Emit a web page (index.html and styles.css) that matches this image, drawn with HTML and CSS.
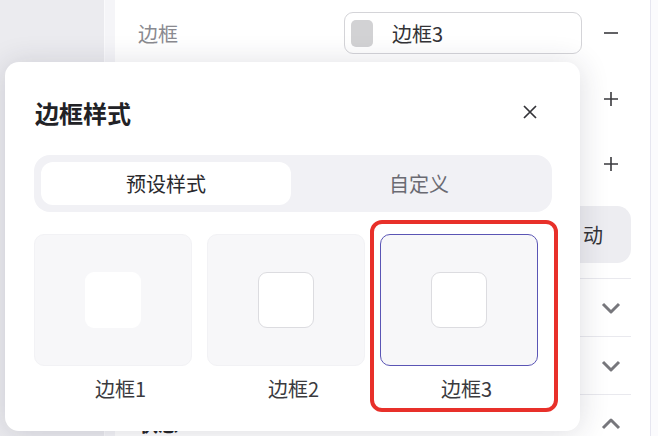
FILE: index.html
```html
<!DOCTYPE html>
<html lang="zh-CN">
<head>
<meta charset="utf-8">
<link rel="stylesheet" href="styles.css">
</head>
<body>
<div class="app">
  <aside class="sidebar"></aside>
  <div class="gutter"></div>
  <main class="panel">
    <div class="row row-1">
      <span class="label">边框</span>
      <div class="select"><span class="swatch"></span><span class="select-text">边框3</span></div>
      <span class="icon-box"><svg width="16" height="16" viewBox="0 0 16 16"><path d="M1 8h14" stroke="#3a3a3e" stroke-width="1.6" fill="none"/></svg></span>
    </div>
    <div class="row row-2">
      <span class="label"></span>
      <span class="icon-box"><svg width="16" height="16" viewBox="0 0 16 16"><path d="M1 8h14M8 1v14" stroke="#3a3a3e" stroke-width="1.6" fill="none"/></svg></span>
    </div>
    <div class="row row-3">
      <span class="label"></span>
      <span class="icon-box"><svg width="16" height="16" viewBox="0 0 16 16"><path d="M1 8h14M8 1v14" stroke="#3a3a3e" stroke-width="1.6" fill="none"/></svg></span>
    </div>
    <div class="row row-4">
      <span class="label"></span>
      <div class="pill">动</div>
    </div>
    <div class="row row-fold">
      <span class="label"></span>
      <span class="icon-box"><svg width="20" height="12" viewBox="0 0 20 12"><path d="M2 2l8 8 8-8" stroke="#77777c" stroke-width="3" fill="none" stroke-linejoin="round"/></svg></span>
    </div>
    <div class="row row-fold">
      <span class="label"></span>
      <span class="icon-box"><svg width="20" height="12" viewBox="0 0 20 12"><path d="M2 2l8 8 8-8" stroke="#77777c" stroke-width="3" fill="none" stroke-linejoin="round"/></svg></span>
    </div>
    <div class="row row-fold">
      <span class="label strong">状态</span>
      <span class="icon-box"><svg width="20" height="12" viewBox="0 0 20 12"><path d="M2 10l8-8 8 8" stroke="#77777c" stroke-width="3" fill="none" stroke-linejoin="round"/></svg></span>
    </div>
  </main>
  <div class="edge"></div>
</div>

<section class="dialog">
  <header class="dialog-head">
    <h2 class="dialog-title">边框样式</h2>
    <span class="close"><svg width="14" height="14" viewBox="0 0 14 14"><path d="M1 1l12 12M13 1L1 13" stroke="#333338" stroke-width="1.7" fill="none"/></svg></span>
  </header>
  <div class="segment">
    <div class="seg-tab active">预设样式</div>
    <div class="seg-tab">自定义</div>
  </div>
  <div class="presets">
    <div class="preset">
      <div class="card"><div class="inner"></div></div>
      <div class="preset-name">边框1</div>
    </div>
    <div class="preset">
      <div class="card"><div class="inner bordered"></div></div>
      <div class="preset-name">边框2</div>
    </div>
    <div class="preset">
      <div class="card selected"><div class="inner bordered"></div></div>
      <div class="preset-name">边框3</div>
    </div>
  </div>
</section>

<div class="highlight"></div>
</body>
</html>
```

FILE: styles.css
```css
* { box-sizing: border-box; }
html, body {
  margin: 0;
  padding: 0;
  width: 658px;
  height: 436px;
  overflow: hidden;
  font-family: "Noto Sans CJK SC", "Noto Sans", sans-serif;
  background: #ffffff;
}
.app {
  display: flex;
  width: 658px;
  height: 436px;
}
.sidebar {
  width: 104px;
  background: #ebebef;
}
.gutter {
  width: 11px;
  background: #f5f5f8;
  border-left: 1px solid #fafafc;
}
.panel {
  flex: 1;
  background: #ffffff;
  padding-left: 23px;
  padding-right: 19px;
}
.edge {
  width: 8px;
  border-left: 1px solid #e6e6f0;
  background: #fbfbfd;
}
.row {
  display: flex;
  align-items: center;
}
.label {
  flex: 1;
  font-size: 20px;
  color: #8a8a90;
}
.label.strong {
  color: #222226;
  font-weight: 600;
}
.row-1 { height: 66px; }
.row-2, .row-3 { height: 65px; }
.row-4 {
  height: 82px;
  padding-top: 10px;
  padding-bottom: 15px;
  align-items: stretch;
}
.row-4 .label { align-self: center; }
.row-fold {
  height: 58px;
  border-top: 1px solid #e9e9ee;
}
.select {
  width: 238px;
  height: 42px;
  border: 1px solid #d4d4d8;
  border-radius: 9px;
  display: flex;
  align-items: center;
  padding-left: 6px;
  margin-right: 9px;
}
.swatch {
  width: 22px;
  height: 27px;
  border-radius: 5px;
  background: #d2d2d4;
  margin-right: 19px;
}
.select-text {
  font-size: 20px;
  color: #333337;
}
.icon-box {
  width: 40px;
  display: flex;
  align-items: center;
  justify-content: center;
}
.pill {
  width: 160px;
  background: #ededf1;
  border-radius: 14px;
  display: flex;
  align-items: center;
  justify-content: flex-end;
  padding-right: 28px;
  font-size: 20px;
  color: #333337;
}

.dialog {
  position: absolute;
  left: 5px;
  top: 62px;
  width: 575px;
  height: 369px;
  background: #ffffff;
  border-radius: 14px;
  box-shadow: 0 2px 30px rgba(40, 40, 60, 0.16);
  padding: 0 28px 0 29px;
}
.dialog-head {
  height: 93px;
  display: flex;
  align-items: center;
  justify-content: space-between;
  padding-top: 7px;
}
.dialog-title {
  margin: 0 0 0 1px;
  font-size: 24px;
  font-weight: 600;
  color: #222226;
}
.close {
  display: flex;
  margin-right: 15px;
}
.segment {
  display: grid;
  grid-template-columns: 1fr 1fr;
  height: 57px;
  background: #f1f1f5;
  border-radius: 16px;
  padding: 7px;
}
.seg-tab {
  display: flex;
  align-items: center;
  justify-content: center;
  font-size: 20px;
  color: #6a6a72;
  border-radius: 12px;
}
.seg-tab.active {
  background: #ffffff;
  color: #2a2a2e;
  margin-right: 2px;
}
.presets {
  display: grid;
  grid-template-columns: repeat(3, 1fr);
  margin-top: 22px;
  margin-right: -1px;
}
.preset {
  display: flex;
  flex-direction: column;
}
.card {
  width: calc(100% - 15px);
  height: 132px;
  background: #f7f7f9;
  border: 1px solid #f2f2f5;
  border-radius: 10px;
  display: flex;
  align-items: center;
  justify-content: center;
}
.card.selected {
  border-color: #5a55b5;
}
.inner {
  width: 56px;
  height: 56px;
  background: #ffffff;
  border-radius: 9px;
}
.inner.bordered {
  border: 1px solid #dcdce0;
}
.preset-name {
  text-align: center;
  font-size: 20px;
  color: #3a3a3e;
  margin-top: 8px;
}
.highlight {
  position: absolute;
  left: 370px;
  top: 220px;
  width: 188px;
  height: 192px;
  border: 4px solid #e8302a;
  border-radius: 12px;
}
```
